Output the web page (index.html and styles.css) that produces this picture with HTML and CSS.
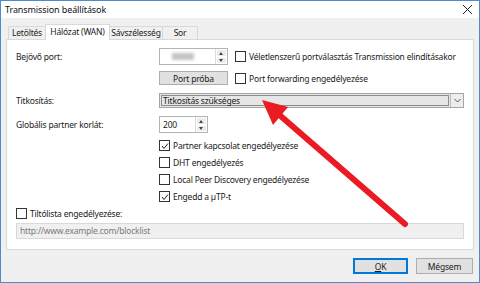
FILE: index.html
```html
<!DOCTYPE html>
<html>
<head>
<meta charset="UTF-8">
<title>Transmission beállítások</title>
<link rel="stylesheet" href="styles.css">
</head>
<body>
<div class="window">
  <div class="titlebar">
    <span class="title">Transmission beállítások</span>
    <svg class="close" width="11" height="11" viewBox="0 0 11 11"><path d="M1 1L10 10M10 1L1 10" stroke="#222" stroke-width="1"/></svg>
  </div>
  <div class="body">
    <div class="tabs">
      <div class="tab t1">Letöltés</div>
      <div class="tab t2 active">Hálózat (WAN)</div>
      <div class="tab t3">Sávszélesség</div>
      <div class="tab t4">Sor</div>
    </div>
    <div class="panel">
      <div class="row r1">
        <div class="lbl">Bejövő port:</div>
        <div class="spin port"><span class="val"><span class="blur"></span></span><span class="arrows"><i class="up"></i><i class="down"></i></span></div>
        <label class="chk side"><span class="box"></span>Véletlenszerű portválasztás Transmission elindításakor</label>
      </div>
      <div class="row r2">
        <div class="lbl"></div>
        <div class="btn probe">Port próba</div>
        <label class="chk side"><span class="box"></span>Port forwarding engedélyezése</label>
      </div>
      <div class="row r3">
        <div class="lbl">Titkosítás:</div>
        <div class="combo"><span class="ctext">Titkosítás szükséges</span><span class="carrow"><svg width="7" height="5" viewBox="0 0 7 5"><path d="M0.5 1L3.5 4L6.5 1" fill="none" stroke="#555" stroke-width="1"/></svg></span></div>
      </div>
      <div class="row r4">
        <div class="lbl">Globális partner korlát:</div>
        <div class="spin peers"><span class="val">200</span><span class="arrows"><i class="up"></i><i class="down"></i></span></div>
      </div>
      <div class="checks">
        <label class="chk"><span class="box on"><svg width="8" height="8" viewBox="0 0 8 8"><path d="M1 4L3 6.5L7 1.5" fill="none" stroke="#222" stroke-width="1"/></svg></span>Partner kapcsolat engedélyezése</label>
        <label class="chk"><span class="box"></span>DHT engedélyezés</label>
        <label class="chk"><span class="box"></span>Local Peer Discovery engedélyezése</label>
        <label class="chk"><span class="box on"><svg width="8" height="8" viewBox="0 0 8 8"><path d="M1 4L3 6.5L7 1.5" fill="none" stroke="#222" stroke-width="1"/></svg></span>Engedd a µTP-t</label>
      </div>
      <label class="chk block"><span class="box"></span>Tiltólista engedélyezése:</label>
      <div class="url">http://www.example.com/blocklist</div>
    </div>
    <div class="footer">
      <div class="btn ok"><u>O</u>K</div>
      <div class="btn cancel">Mégsem</div>
    </div>
  </div>
  <svg class="arrow" width="480" height="283" viewBox="0 0 480 283">
    <line x1="405" y1="224" x2="276" y2="112" stroke="#ea1b22" stroke-width="6" stroke-linecap="round"/>
    <polygon points="262,100 273,125 288,107" fill="#ea1b22"/>
  </svg>
</div>
</body>
</html>
```
FILE: styles.css
```css
body{
	margin:0;
	padding:0;
	font-family:"Noto Sans","Liberation Sans",sans-serif;
	font-size:8.5px;
	letter-spacing:-0.2px;
	color:#1a1a1a;
}
.window{
	position:relative;
	width:480px;
	height:283px;
	box-sizing:border-box;
	border:1px solid #4f8bc9;
	display:flex;
	flex-direction:column;
	background:#f0f0f0;
}
.titlebar{
	height:17px;
	background:#fff;
	display:flex;
	align-items:center;
	justify-content:space-between;
	padding:0 6px 0 4px;
}
.title{font-size:9px;letter-spacing:-0.1px;color:#111;}
.body{
	flex:1;
	display:flex;
	flex-direction:column;
	padding:6px 5px 0 5px;
}
.tabs{
	display:flex;
	align-items:flex-end;
	height:15px;
	padding-left:2px;
}
.tab{
	height:13px;
	line-height:12px;
	box-sizing:border-box;
	border:1px solid #d9d9d9;
	border-bottom:none;
	background:#f0f0f0;
	text-align:center;
	white-space:nowrap;
}
.t1{width:37px;border-right:none;}
.t2{width:65px;}
.t3{width:53px;border-left:none;}
.t4{width:35px;border-left:none;}
.tab.active{
	height:16px;
	line-height:14px;
	background:#fff;
	margin-bottom:-1px;
	position:relative;
	z-index:1;
}
.panel{
	background:#fff;
	border:1px solid #d9d9d9;
	height:211px;
	box-sizing:border-box;
	padding:8px 9px 0 9px;
	display:flex;
	flex-direction:column;
}
.row{
	display:flex;
	align-items:center;
}
.lbl{width:143px;flex:none;}
.r1{height:17px;}
.r2{height:14px;margin-top:6px;}
.r3{height:15px;margin-top:8px;}
.r4{height:17px;margin-top:8px;}
.spin{
	display:flex;
	height:17px;
	box-sizing:border-box;
	border:1px solid #b4b4b4;
	background:#fff;
}
.spin .val{
	flex:1;
	padding-left:3px;
	line-height:15px;
}
.blur{
	display:block;
	width:22px;
	height:7px;
	margin:4px 0 0 9px;
	background:#c4c4c4;
	filter:blur(1.6px);
}
.port{width:69px;}
.peers{width:49px;}
.arrows{
	width:11px;
	display:flex;
	flex-direction:column;
	border-left:1px solid #dcdcdc;
}
.arrows i{
	flex:1;
	background:#ececec;
	position:relative;
	border:1px solid #fff;
}
.arrows i::after{
	content:"";
	position:absolute;
	left:2px;
	top:2px;
	border-left:2px solid transparent;
	border-right:2px solid transparent;
}
.arrows .up::after{border-bottom:3px solid #444;}
.arrows .down::after{border-top:3px solid #444;top:1px;}
.chk{
	display:flex;
	align-items:center;
	height:17px;
	white-space:nowrap;
}
.side{margin-left:7px;}
.box{
	width:9px;
	height:9px;
	border:1px solid #333;
	background:#fff;
	margin-right:3px;
	flex:none;
	display:flex;
	align-items:center;
	justify-content:center;
}
.btn{
	box-sizing:border-box;
	border:1px solid #adadad;
	background:#e1e1e1;
	text-align:center;
	display:flex;
	align-items:center;
	justify-content:center;
}
.probe{width:69px;height:14px;}
.combo{
	width:306px;
	height:15px;
	box-sizing:border-box;
	border:1px solid #a5a5a5;
	background:#e6e6e6;
	display:flex;
}
.ctext{
	flex:1;
	margin:1px;
	border:1px solid #8c8c8c;
	line-height:9px;
	padding-left:1px;
}
.carrow{
	width:12px;
	border-left:1px solid #bdbdbd;
	background:#ededed;
	display:flex;
	align-items:center;
	justify-content:center;
}
.checks{
	margin-top:4px;
	margin-left:143px;
}
.url{
	margin-top:1px;
	width:448px;
	height:16px;
	box-sizing:border-box;
	border:1px solid #d9d9d9;
	background:#f0f0f0;
	color:#7a7a7a;
	padding-left:3px;
	line-height:14px;
}
.footer{
	display:flex;
	justify-content:flex-end;
	gap:8px;
	padding:8px 1px 0 0;
}
.ok{
	width:55px;
	height:16px;
	border:1px solid #0078d7;
	box-shadow:inset 0 0 0 1px #0078d7;
}
.cancel{width:57px;height:16px;}
.arrow{
	position:absolute;
	left:-1px;
	top:-1px;
	pointer-events:none;
}
```
